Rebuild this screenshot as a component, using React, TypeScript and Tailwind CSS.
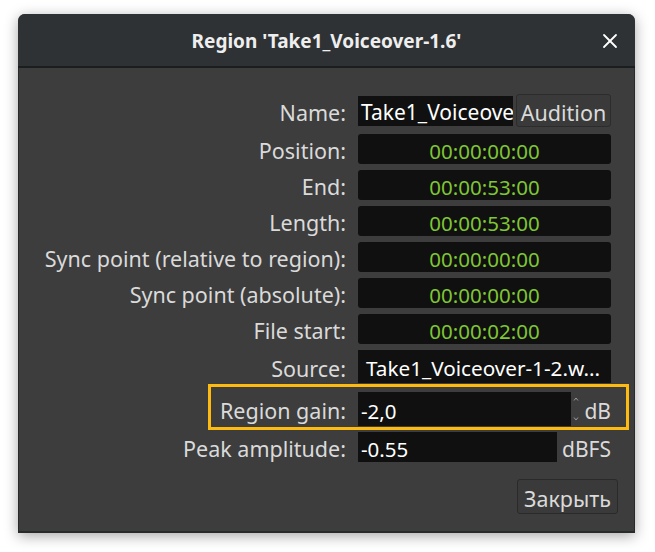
import { X } from "lucide-react"

const font = { fontFamily: '"Noto Sans", "Open Sans", sans-serif' }

const Label = ({ children }: { children: React.ReactNode }) => (
  <div className="w-[328px] shrink-0 whitespace-nowrap pr-[1px] pt-[4px] text-right text-[21.5px] leading-none text-[#dadada]">{children}</div>
)

const Clock = ({ label, value }: { label: string; value: string }) => (
  <div className="flex h-[30px] items-center gap-[11px]">
    <Label>{label}</Label>
    <div className="flex h-[30px] w-[253px] items-center justify-center rounded-[3px] bg-[#101010] pt-[4px] text-[20.5px] leading-none text-[#7fc733]">
      {value}
    </div>
  </div>
)

export default function App() {
  return (
    <div className="h-[552px] w-[655px] bg-white pl-[18px] pt-[14px]" style={font}>
      <div className="flex h-[519px] w-[617px] flex-col overflow-hidden rounded-t-[7px] bg-[#3d3d3d] shadow-[0_3px_14px_rgba(0,0,0,0.35)]">
        <div className="relative flex h-[54px] shrink-0 items-center justify-center border-b-2 border-[#1b1e1f] bg-[#2e3234]">
          <span className="pt-[2px] text-[19px] font-bold text-[#eeeeee]">Region 'Take1_Voiceover-1.6'</span>
          <X className="absolute right-[13px] top-[15px] h-[24px] w-[24px] text-white" strokeWidth={1.8} />
        </div>

        <div className="flex flex-1 flex-col border-x border-b-2 border-[#272b2c] pt-[26px]">
          <div className="flex h-[33px] items-center gap-[11px]">
            <Label>Name:</Label>
            <div className="flex w-[253px] items-center gap-[3px]">
              <div className="flex h-[30px] w-[155px] shrink-0 items-center overflow-hidden whitespace-nowrap bg-[#101010] pl-[3px] pt-[4px] text-[21px] leading-none text-white">
                Take1_Voiceover-1.6
              </div>
              <button className="flex h-[33px] w-[95px] shrink-0 items-center justify-center whitespace-nowrap rounded-[3px] border border-[#2c2c2c] bg-[#3a3a3a] pt-[4px] text-[21.5px] leading-none text-[#dadada]">
                Audition
              </button>
            </div>
          </div>

          <div className="mt-[7px] flex flex-col gap-[6px]">
            <Clock label="Position:" value="00:00:00:00" />
            <Clock label="End:" value="00:00:53:00" />
            <Clock label="Length:" value="00:00:53:00" />
            <Clock label="Sync point (relative to region):" value="00:00:00:00" />
            <Clock label="Sync point (absolute):" value="00:00:00:00" />
            <Clock label="File start:" value="00:00:02:00" />
          </div>

          <div className="mt-[6px] flex h-[33px] items-center gap-[11px]">
            <Label>Source:</Label>
            <div className="flex h-[33px] w-[253px] items-center overflow-hidden whitespace-nowrap bg-[#101010] pl-[8px] pt-[4px] text-[20.7px] leading-none text-white">
              Take1_Voiceover-1-2.w...
            </div>
          </div>

          <div className="relative mt-[6px] flex h-[40px] items-center gap-[11px]">
            <div className="absolute left-[189px] top-[-5px] h-[46px] w-[421px] border-[3px] border-[#fdbb12]" />
            <Label>Region gain:</Label>
            <div className="flex w-[253px] items-center">
              <div className="flex h-[34px] w-[213px] items-center bg-[#101010] pl-[3px] pt-[4px] text-[20.5px] leading-none text-white">-2,0</div>
              <div className="ml-[2px] flex h-[28px] w-[6px] flex-col justify-between py-[2px]">
                <svg viewBox="0 0 6 4" className="h-[4px] w-[6px]"><path d="M1 3.5 L3 1 L5 3.5" fill="none" stroke="#9a9a9a" strokeWidth="1" /></svg>
                <svg viewBox="0 0 6 4" className="h-[4px] w-[6px]"><path d="M1 0.5 L3 3 L5 0.5" fill="none" stroke="#9a9a9a" strokeWidth="1" /></svg>
              </div>
              <span className="ml-auto pt-[4px] text-[21px] leading-none text-[#dadada]">dB</span>
            </div>
          </div>

          <div className="mt-[3px] flex h-[30px] items-center gap-[11px]">
            <Label>Peak amplitude:</Label>
            <div className="flex w-[253px] items-center">
              <div className="flex h-[30px] w-[199px] items-center bg-[#101010] pl-[3px] pt-[4px] text-[20.5px] leading-none text-white">-0.55</div>
              <span className="ml-auto pt-[4px] text-[21px] leading-none text-[#dadada]">dBFS</span>
            </div>
          </div>

          <div className="mt-[17px] flex justify-end pr-[16px]">
            <button className="flex h-[35px] w-[101px] items-center justify-center rounded-[3px] border border-[#2a2a2a] bg-[#3a3a3a] pt-[4px] text-[21.5px] leading-none text-[#dadada]">
              Закрыть
            </button>
          </div>
        </div>
      </div>
    </div>
  )
}
